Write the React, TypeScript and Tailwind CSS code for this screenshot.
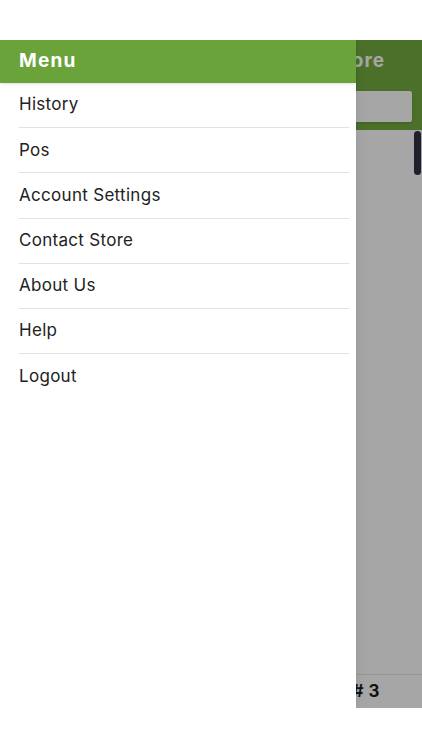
import React from "react";

const menuItems = ["History", "Pos", "Account Settings", "Contact Store", "About Us", "Help", "Logout"];

export default function App() {
    return (
        <div
            className="w-[422px] h-[750px] bg-white flex flex-col"
            style={{ fontFamily: "Inter, 'Liberation Sans', Arial, sans-serif" }}
        >
            <div className="h-[40px] bg-white" />

            {/* app screen with drawer open */}
            <div className="relative h-[668px] flex flex-col bg-white overflow-hidden">
                <div className="bg-[#73ac3f] flex flex-col">
                    <div className="h-[43px] flex items-center justify-end pr-[37px]">
                        <span className="text-white text-[19px] font-bold tracking-[1px]">Grocery Store</span>
                    </div>
                    <div className="mx-[10px] mt-[8px] mb-[8px] h-[31px] bg-white rounded-[2px] shadow" />
                </div>
                <div className="flex-1 bg-white relative">
                    <div className="absolute right-[1px] top-[1px] w-[7px] h-[44px] rounded-full bg-[#2e3443]" />
                </div>
                <div className="h-[34px] border-t border-[#e6e6e6] flex items-center justify-end pr-[42px]">
                    <span className="text-[#1c1c1c] text-[17px] font-bold tracking-[0.5px]">Table # 3</span>
                </div>

                {/* scrim */}
                <div className="absolute inset-0 bg-black/35" />

                {/* drawer */}
                <div className="absolute left-0 top-0 bottom-0 w-[356px] bg-white shadow-lg flex flex-col">
                    <div className="h-[43px] bg-[#6aa33a] flex items-center px-[19px] shadow-sm">
                        <span className="text-white text-[19px] font-bold tracking-[1.2px]">Menu</span>
                    </div>
                    <ul className="px-[19px] pr-[7px]">
                        {menuItems.map((item, i) => (
                            <li
                                key={item}
                                className={
                                    "h-[45.2px] flex items-center text-[17px] tracking-[0.3px] text-[#222222] " +
                                    (i < menuItems.length - 1 ? "border-b border-[#e2e2e2]" : "")
                                }
                            >
                                {item}
                            </li>
                        ))}
                    </ul>
                </div>
            </div>

            <div className="flex-1 bg-white" />
        </div>
    );
}
